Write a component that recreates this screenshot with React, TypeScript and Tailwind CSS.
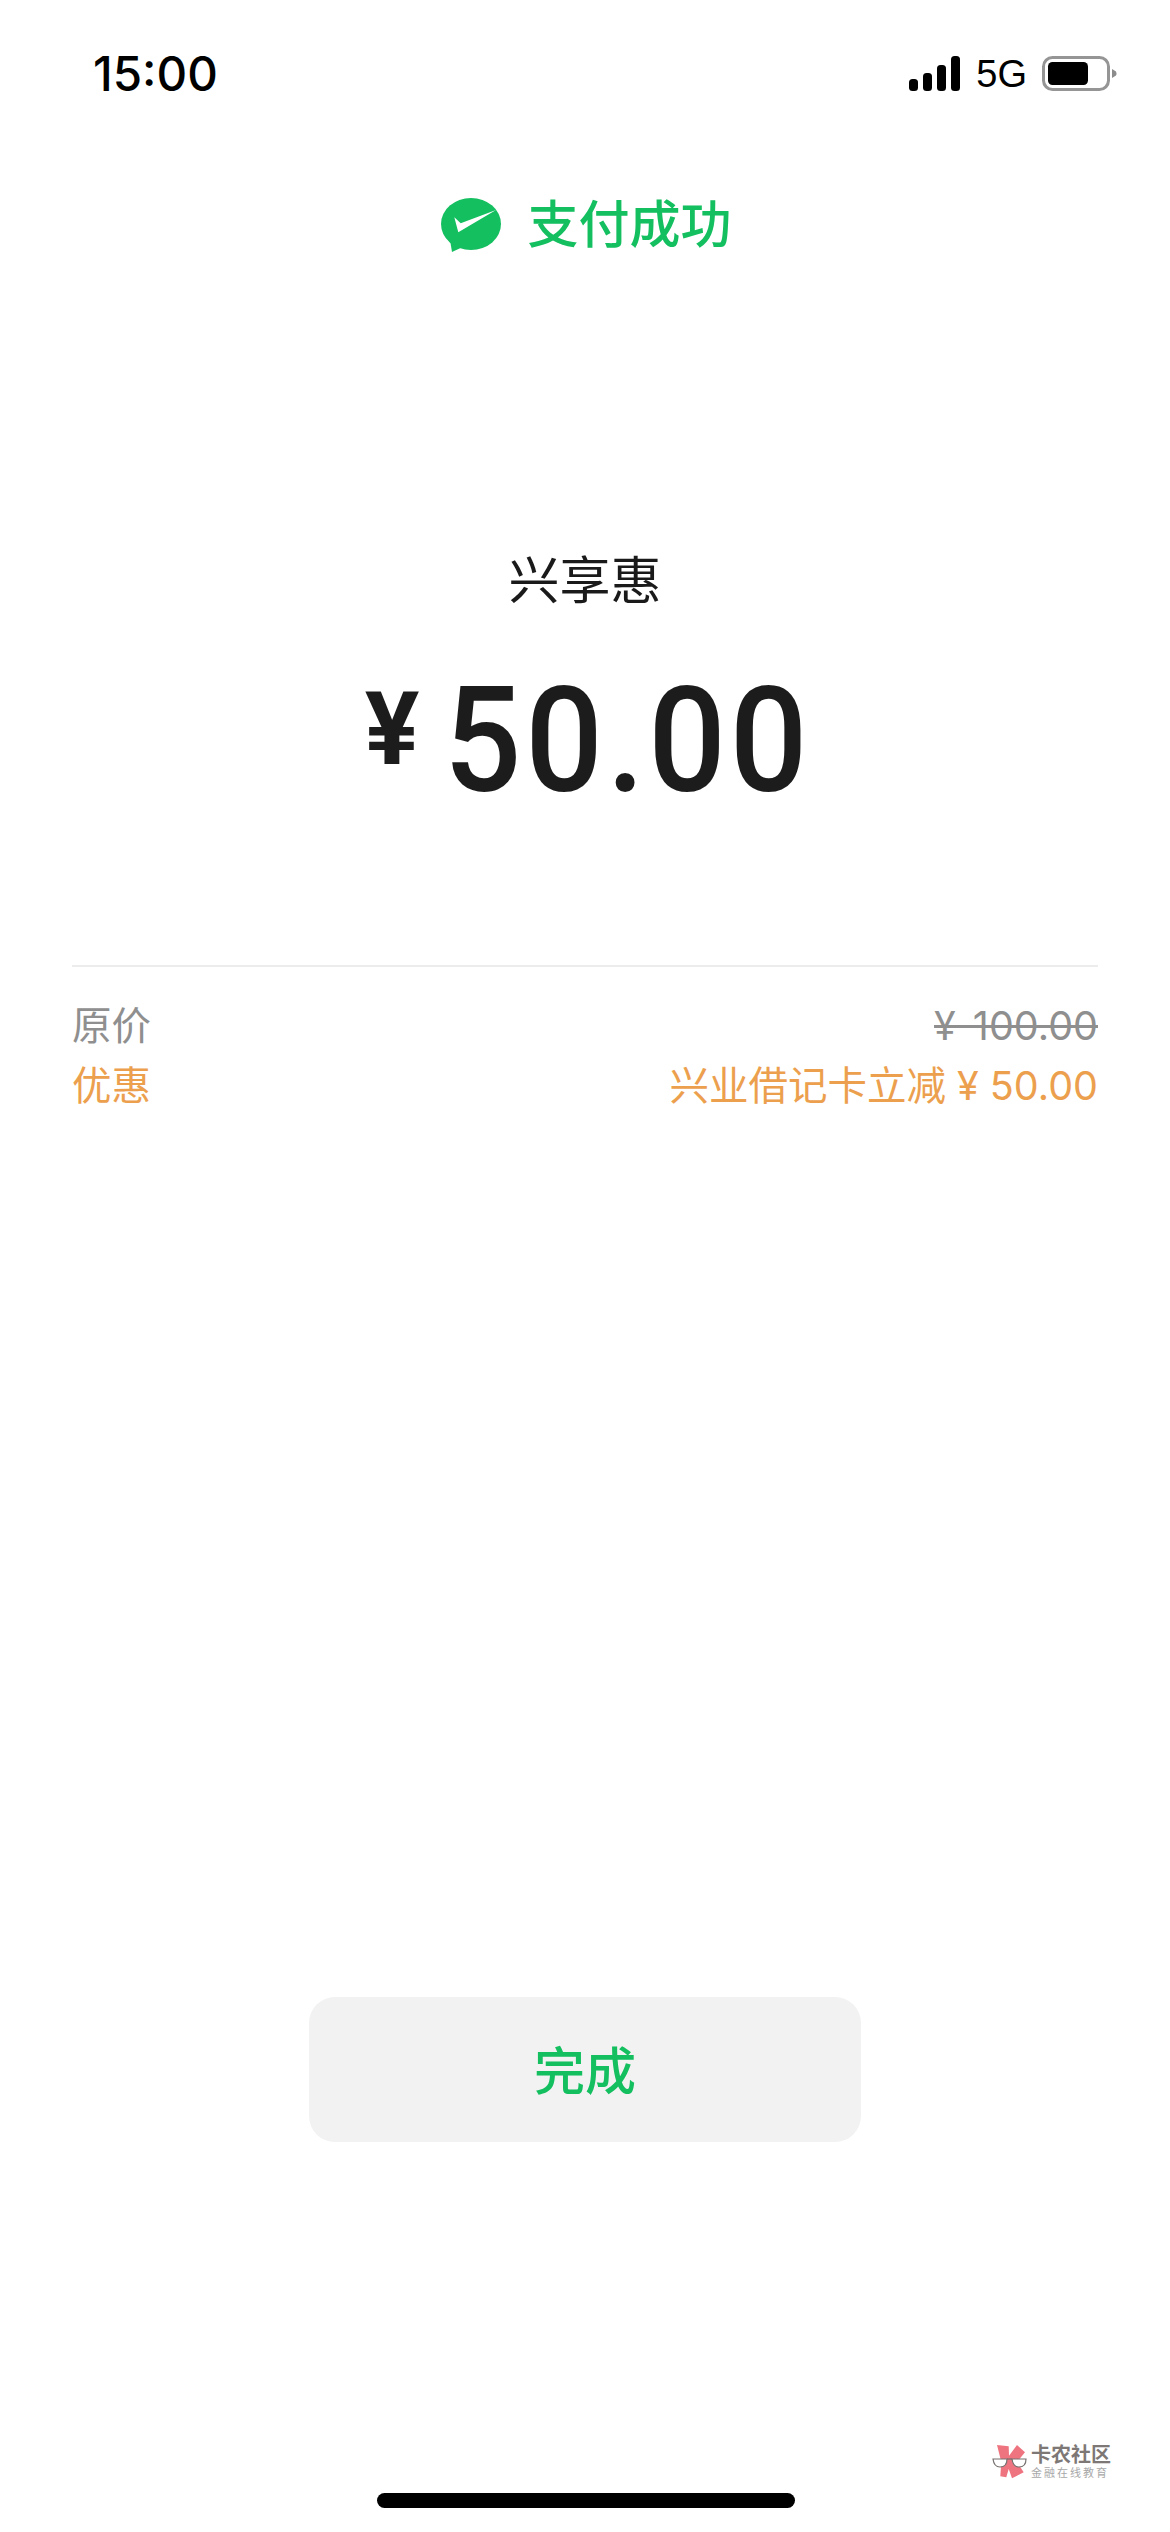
const CJK = "font-['Inter','Noto_Sans_CJK_SC',sans-serif]";

function SignalIcon() {
  return (
    <svg width="52" height="36" viewBox="0 0 52 36" fill="#000">
      <rect x="0" y="23" width="9" height="12" rx="3.5" />
      <rect x="14" y="17" width="9" height="18" rx="3.5" />
      <rect x="28" y="9" width="9" height="26" rx="3.5" />
      <rect x="42" y="0" width="9" height="35" rx="3.5" />
    </svg>
  );
}

function BatteryIcon() {
  return (
    <svg width="76" height="36" viewBox="0 0 76 36">
      <rect x="1.5" y="1.5" width="65" height="32" rx="9" fill="none" stroke="#959595" strokeWidth="3" />
      <rect x="6" y="6" width="40" height="23" rx="4.5" fill="#000" />
      <path d="M70 13 L74 15.5 Q75 17.5 74 19.5 L70 22 Z" fill="#8c8c8c" />
    </svg>
  );
}

function WeChatPayIcon() {
  return (
    <svg width="60" height="54" viewBox="0 0 60 54">
      <ellipse cx="30" cy="26" rx="30" ry="26" fill="#14bf60" />
      <path d="M9 42 L11 54 L26 47 Z" fill="#14bf60" />
      <path d="M13.3 19.3 L19.7 25.3 L55 12 L17.3 34.3 Z" fill="#fff" />
    </svg>
  );
}

function WatermarkLogo() {
  return (
    <svg width="36" height="36" viewBox="0 0 36 36">
      <path
        d="M5 1 L16.7 2.3 L17 11.7 L25 1 L33 8.3 L25 18 L31.7 28.3 L20 34.3 L16.7 25 L14.3 33.3 L8.3 32.3 L9.3 18 Z"
        fill="#ee7480"
      />
      <path d="M1 15 H15 Q15 23 8 23 Q2 23 1 15 Z" fill="#fff" stroke="#77716f" strokeWidth="1.2" />
      <path d="M20 15 H34 Q34 23 27 23 Q21 23 20 15 Z" fill="#fff" stroke="#77716f" strokeWidth="1.2" />
      <path d="M15 15 H20" stroke="#77716f" strokeWidth="1.2" />
    </svg>
  );
}

export default function App() {
  return (
    <div className={`relative h-[2532px] w-[1170px] overflow-hidden bg-white ${CJK}`}>
      <div className="flex h-[147px] items-center justify-between pl-[93px] pr-[52px]">
        <span className="text-[47.5px] leading-none font-medium text-black">15:00</span>
        <div className="flex items-center gap-[15px]">
          <SignalIcon />
          <span className="font-['Liberation_Sans',sans-serif] text-[38px] leading-none text-black">5G</span>
          <BatteryIcon />
        </div>
      </div>

      <div className="mt-[46px] flex items-center justify-center gap-[26px] pl-[3px]">
        <WeChatPayIcon />
        <span className="text-[51px] leading-[64px] font-medium text-[#14bf60]">支付成功</span>
      </div>

      <div className="mt-[289px] text-center text-[51px] leading-[70px] text-[#1a1a1a]">兴享惠</div>

      <div className="mt-[40px] flex items-start justify-center pl-[20px] font-['Roboto',sans-serif] font-medium text-[#1c1c1c]">
        <span className="mt-[8px] mr-[11px] text-[102px] leading-[130px] font-bold">¥</span>
        <span className="scale-x-[0.93] text-[147px] leading-[170px] tracking-[4px]">50.00</span>
      </div>

      <div className="mx-[72px] mt-[139px] border-t-2 border-[#ececec] pt-[29px] text-[39.5px] leading-[60px]">
        <div className="flex justify-between text-[#8f8f8f]">
          <span>原价</span>
          <span className="line-through [word-spacing:6px]">¥ 100.00</span>
        </div>
        <div className="flex justify-between text-[#eca04e]">
          <span>优惠</span>
          <span>兴业借记卡立减 ¥ 50.00</span>
        </div>
      </div>

      <div className="mt-[881px] flex justify-center">
        <button className="h-[145px] w-[552px] rounded-[26px] bg-[#f2f2f2] pt-[5px] text-[51px] font-medium text-[#14bf60]">
          完成
        </button>
      </div>

      <div className="absolute bottom-[52px] left-[992px] flex items-center gap-[3px]">
        <WatermarkLogo />
        <div className="flex flex-col">
          <span className="text-[20px] leading-[22px] font-bold text-[#7d7876]">卡农社区</span>
          <span className="text-[11px] leading-[14px] tracking-[2px] text-[#a8a8a8]">金融在线教育</span>
        </div>
      </div>

      <div className="absolute bottom-[24px] left-[377px] h-[15px] w-[418px] rounded-full bg-black" />
    </div>
  );
}
